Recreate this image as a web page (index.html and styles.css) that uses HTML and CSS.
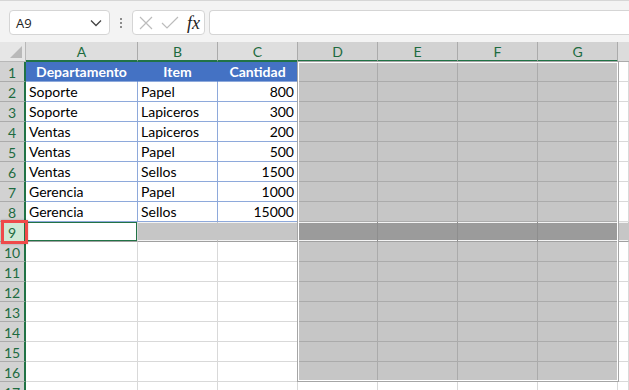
FILE: index.html
```html
<!DOCTYPE html>
<html lang="es">
<head>
  <meta charset="UTF-8" />
  <title>Hoja de cálculo</title>
  <link rel="stylesheet" href="styles.css">
</head>
<body>
  <div class="formula-bar">
    <div class="name-box">
      <span>A9</span>
      <svg class="chevron" width="12" height="8" viewBox="0 0 12 8"><polyline points="1,1.5 6,6.5 11,1.5" fill="none" stroke="#444" stroke-width="1.3"/></svg>
    </div>
    <div class="dots"><i></i><i></i><i></i></div>
    <div class="fx-buttons">
      <svg width="16" height="16" viewBox="0 0 16 16"><path d="M2 2 L14 14 M14 2 L2 14" stroke="#bcbcbc" stroke-width="1.2" fill="none"/></svg>
      <svg width="18" height="16" viewBox="0 0 18 16"><polyline points="1,8 6,13 17,2" stroke="#bcbcbc" stroke-width="1.2" fill="none"/></svg>
      <span class="fx">fx</span>
    </div>
    <div class="formula-input"></div>
  </div>

  <div class="sheet">
    <div class="corner"><span class="tri"></span></div>
    <div class="col-head">A</div>
    <div class="col-head">B</div>
    <div class="col-head">C</div>
    <div class="col-head sel">D</div>
    <div class="col-head sel">E</div>
    <div class="col-head sel">F</div>
    <div class="col-head sel">G</div>
    <div class="col-head rest"></div>

    <div class="row-head">1</div>
    <div class="cell th">Departamento</div><div class="cell th">Item</div><div class="cell th">Cantidad</div>
    <div class="cell grey"></div><div class="cell grey"></div><div class="cell grey"></div><div class="cell grey"></div><div class="cell"></div>

    <div class="row-head">2</div>
    <div class="cell td">Soporte</div><div class="cell td">Papel</div><div class="cell td num">800</div>
    <div class="cell grey"></div><div class="cell grey"></div><div class="cell grey"></div><div class="cell grey"></div><div class="cell"></div>

    <div class="row-head">3</div>
    <div class="cell td">Soporte</div><div class="cell td">Lapiceros</div><div class="cell td num">300</div>
    <div class="cell grey"></div><div class="cell grey"></div><div class="cell grey"></div><div class="cell grey"></div><div class="cell"></div>

    <div class="row-head">4</div>
    <div class="cell td">Ventas</div><div class="cell td">Lapiceros</div><div class="cell td num">200</div>
    <div class="cell grey"></div><div class="cell grey"></div><div class="cell grey"></div><div class="cell grey"></div><div class="cell"></div>

    <div class="row-head">5</div>
    <div class="cell td">Ventas</div><div class="cell td">Papel</div><div class="cell td num">500</div>
    <div class="cell grey"></div><div class="cell grey"></div><div class="cell grey"></div><div class="cell grey"></div><div class="cell"></div>

    <div class="row-head">6</div>
    <div class="cell td">Ventas</div><div class="cell td">Sellos</div><div class="cell td num">1500</div>
    <div class="cell grey"></div><div class="cell grey"></div><div class="cell grey"></div><div class="cell grey"></div><div class="cell"></div>

    <div class="row-head">7</div>
    <div class="cell td">Gerencia</div><div class="cell td">Papel</div><div class="cell td num">1000</div>
    <div class="cell grey"></div><div class="cell grey"></div><div class="cell grey"></div><div class="cell grey"></div><div class="cell"></div>

    <div class="row-head">8</div>
    <div class="cell td">Gerencia</div><div class="cell td">Sellos</div><div class="cell td num">15000</div>
    <div class="cell grey"></div><div class="cell grey"></div><div class="cell grey"></div><div class="cell grey"></div><div class="cell"></div>

    <div class="row-head marked">9<span class="marker"></span></div>
    <div class="cell active"></div><div class="cell band"></div><div class="cell band"></div>
    <div class="cell band dark"></div><div class="cell band dark"></div><div class="cell band dark"></div><div class="cell band dark"></div><div class="cell band"></div>

    <div class="row-head">10</div>
    <div class="cell"></div><div class="cell"></div><div class="cell"></div>
    <div class="cell grey"></div><div class="cell grey"></div><div class="cell grey"></div><div class="cell grey"></div><div class="cell"></div>

    <div class="row-head">11</div>
    <div class="cell"></div><div class="cell"></div><div class="cell"></div>
    <div class="cell grey"></div><div class="cell grey"></div><div class="cell grey"></div><div class="cell grey"></div><div class="cell"></div>

    <div class="row-head">12</div>
    <div class="cell"></div><div class="cell"></div><div class="cell"></div>
    <div class="cell grey"></div><div class="cell grey"></div><div class="cell grey"></div><div class="cell grey"></div><div class="cell"></div>

    <div class="row-head">13</div>
    <div class="cell"></div><div class="cell"></div><div class="cell"></div>
    <div class="cell grey"></div><div class="cell grey"></div><div class="cell grey"></div><div class="cell grey"></div><div class="cell"></div>

    <div class="row-head">14</div>
    <div class="cell"></div><div class="cell"></div><div class="cell"></div>
    <div class="cell grey"></div><div class="cell grey"></div><div class="cell grey"></div><div class="cell grey"></div><div class="cell"></div>

    <div class="row-head">15</div>
    <div class="cell"></div><div class="cell"></div><div class="cell"></div>
    <div class="cell grey"></div><div class="cell grey"></div><div class="cell grey"></div><div class="cell grey"></div><div class="cell"></div>

    <div class="row-head">16</div>
    <div class="cell"></div><div class="cell"></div><div class="cell"></div>
    <div class="cell grey"></div><div class="cell grey"></div><div class="cell grey"></div><div class="cell grey"></div><div class="cell"></div>

    <div class="row-head">17</div>
    <div class="cell"></div><div class="cell"></div><div class="cell"></div>
    <div class="cell"></div><div class="cell"></div><div class="cell"></div><div class="cell"></div><div class="cell"></div>

    <div class="block-outline"></div>
  </div>
</body>
</html>
```

FILE: styles.css
```css
* {
  box-sizing: border-box;
}

body {
  margin: 0;
  width: 629px;
  height: 390px;
  overflow: hidden;
  background: #ffffff;
  font-family: 'Lato', 'Open Sans', sans-serif;
  color: #000;
}

/* formula bar */
.formula-bar {
  height: 42px;
  background: #f3f3f3;
  border-top: 1px solid #d6d6d6;
  padding: 9px 0 0 9px;
  display: flex;
  align-items: flex-start;
}

.name-box {
  width: 101px;
  height: 25px;
  background: #fff;
  border: 1px solid #d5d5d5;
  border-radius: 4px;
  display: flex;
  align-items: center;
  justify-content: space-between;
  padding: 0 7px 0 6px;
  font-family: 'Open Sans', sans-serif;
  font-size: 13px;
  color: #222;
}

.dots {
  width: 22px;
  height: 25px;
  display: flex;
  flex-direction: column;
  align-items: center;
  justify-content: center;
  gap: 2px;
}

.dots i {
  width: 2px;
  height: 2px;
  background: #8c8c8c;
}

.fx-buttons {
  width: 73px;
  height: 25px;
  background: #fff;
  border: 1px solid #d5d5d5;
  border-radius: 4px;
  display: flex;
  align-items: center;
  padding: 0 0 0 5px;
  gap: 7px;
}

.fx {
  font-family: 'Liberation Serif', serif;
  font-style: italic;
  font-size: 18px;
  color: #222;
  margin-left: 1px;
  line-height: 1;
}

.formula-input {
  flex: 1;
  height: 25px;
  margin-left: 4px;
  background: #fff;
  border: 1px solid #d5d5d5;
  border-right: none;
  border-radius: 4px 0 0 4px;
}

/* sheet grid */
.sheet {
  position: relative;
  display: grid;
  grid-template-columns: 26px 112px repeat(6, 80px) 1fr;
  grid-auto-rows: 20px;
}

.corner {
  position: relative;
  background: #e6e6e6;
  border-right: 1px solid #b8b8b8;
  border-bottom: 1px solid #b8b8b8;
}

.tri {
  position: absolute;
  right: 3px;
  bottom: 3px;
  width: 0;
  height: 0;
  border-left: 12px solid transparent;
  border-bottom: 12px solid #b9b9b9;
}

.col-head {
  background: #dedede;
  border-right: 1px solid #ababab;
  border-bottom: 2px solid #217346;
  color: #1d6b3f;
  font-size: 14px;
  text-align: center;
  line-height: 19px;
}

.col-head.sel {
  background: #d2d2d2;
}

.col-head.rest {
  background: #dcdcdc;
  border-bottom: 1px solid #ababab;
  border-right: none;
}

.row-head {
  position: relative;
  background: #d2d2d2;
  border-right: 2px solid #217346;
  border-bottom: 1px solid #ababab;
  color: #1d6b3f;
  font-size: 14px;
  text-align: center;
  line-height: 21px;
}

.row-head.marked {
  background: #cfe9d5;
  z-index: 2;
}

.marker {
  position: absolute;
  left: 1px;
  top: -2px;
  width: 27px;
  height: 24px;
  border: 3px solid #ef4a4a;
  box-shadow: 0 0 2px rgba(0, 0, 0, 0.25);
}

.cell {
  border-right: 1px solid #d9d9d9;
  border-bottom: 1px solid #d9d9d9;
  font-size: 14px;
  line-height: 20px;
  padding: 0 3px;
  white-space: nowrap;
  overflow: hidden;
}

.th {
  background: #4472c4;
  color: #fff;
  font-weight: bold;
  text-align: center;
  border-color: #8ea9db;
  border-right-color: #4472c4;
}

.th + .th + .th {
  border-right-color: #8ea9db;
}

.td {
  border-color: #8ea9db;
}

.num {
  text-align: right;
}

.grey {
  background: #c6c6c6;
  border-color: #ababab;
}

.band {
  background: #c6c6c6;
  border-right-color: #c6c6c6;
  border-bottom-color: #a0a0a0;
  box-shadow: inset 0 1px 0 #f4f4f4, inset 0 -1px 0 #f4f4f4;
}

.band.dark {
  background: #9b9b9b;
  border-right-color: #8e8e8e;
}

.active {
  background: #fff;
  box-shadow: inset 0 0 0 1px #217346;
  border-bottom-color: #a0a0a0;
}

.block-outline {
  position: absolute;
  left: 297px;
  top: 19px;
  width: 322px;
  height: 321px;
  border: 1px solid #a6a6a6;
  box-shadow: inset 0 0 0 1px #ffffff;
  pointer-events: none;
}
```
